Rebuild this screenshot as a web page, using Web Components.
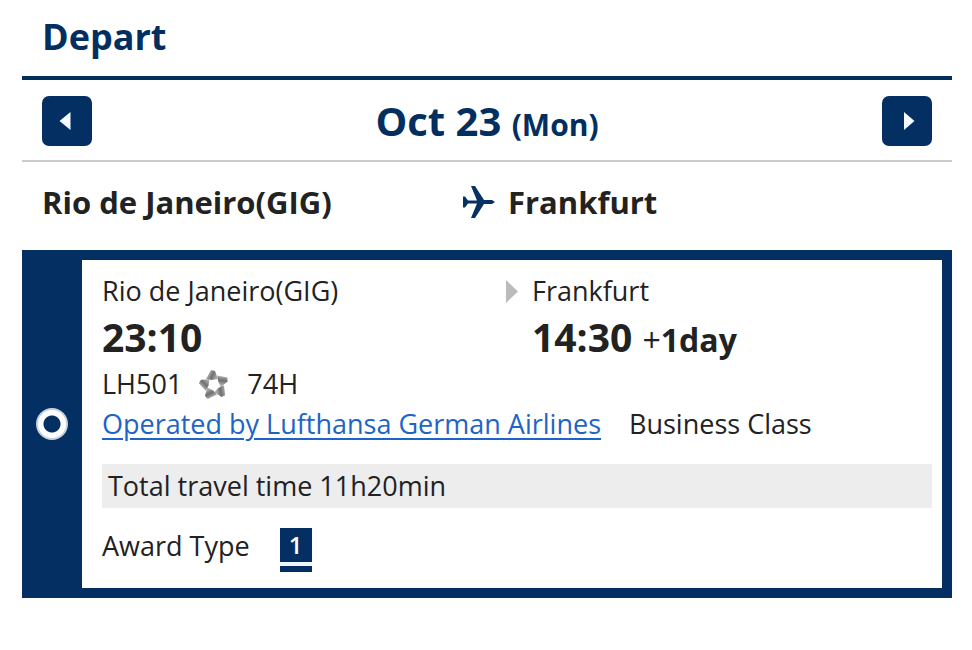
<!DOCTYPE html>
<html lang="en">
<head>
<meta charset="utf-8">
<title>Depart</title>
<style>
  body { margin: 0; background: #fff; color: #222; font-family: "Open Sans", "Noto Sans", sans-serif; font-size: 27px; line-height: 40px; }
</style>
</head>
<body>
<flight-section>
  <span slot="title">Depart</span>
  <date-nav slot="nav" day="Oct 23" weekday="(Mon)"></date-nav>
  <route-heading slot="route" from="Rio de Janeiro(GIG)" to="Frankfurt"></route-heading>
  <flight-card>
    <flight-leg>
      <flight-stop place="Rio de Janeiro(GIG)" time="23:10"></flight-stop>
      <flight-stop slot="arrival" place="Frankfurt" time="14:30"><span>+</span>1day</flight-stop>
    </flight-leg>
    <flight-info number="LH501" aircraft="74H" operator="Operated by Lufthansa German Airlines" cabin="Business Class"></flight-info>
    <travel-time>Total travel time 11h20min</travel-time>
    <award-type level="1">Award Type</award-type>
  </flight-card>
</flight-section>
<script>
const define = (name, markup) => customElements.define(name, class extends HTMLElement {
  constructor() {
    super();
    this.attachShadow({ mode: 'open' });
  }
  connectedCallback() {
    this.shadowRoot.innerHTML = markup(key => this.getAttribute(key) || '');
  }
});

define('flight-section', () => `
  <style>
    :host { display: block; padding: 0 20px 0 22px; }
    h1 { margin: 0; padding: 12px 20px 14px; border-bottom: 4px solid #022f5f; color: #022f5f; font-size: 36px; line-height: 50px; font-weight: 700; }
  </style>
  <section>
    <h1><slot name="title"></slot></h1>
    <slot name="nav"></slot>
    <slot name="route"></slot>
    <slot></slot>
  </section>`);

define('date-nav', a => `
  <style>
    :host { display: block; border-bottom: 2px solid #ccc; color: #022f5f; }
    nav { display: flex; align-items: center; justify-content: space-between; padding: 16px 20px 14px; }
    h2 { margin: 0; font-size: 40px; line-height: 50px; font-weight: 700; }
    small { font-size: 30px; line-height: 30px; }
    button { display: grid; place-items: center; width: 50px; height: 50px; padding: 0; border: 0; border-radius: 7px; background: #042f62; }
    svg { display: block; width: 50px; height: 50px; }
  </style>
  <nav aria-label="Departure date">
    <button type="button" aria-label="Previous day"><svg viewBox="0 0 50 50"><path d="M17.500 25 28.500 16V34Z" fill="#f4faff"/></svg></button>
    <h2>${a('day')} <small>${a('weekday')}</small></h2>
    <button type="button" aria-label="Next day"><svg viewBox="0 0 50 50"><path d="M32.500 25 22 16V34Z" fill="#f4faff"/></svg></button>
  </nav>`);

define('route-heading', a => `
  <style>
    :host { display: grid; grid-template-columns: 420fr 470fr; align-items: center; padding: 20px 20px 28px; font-size: 31px; font-weight: 700; }
    .to { display: flex; align-items: center; gap: 12px; }
    svg { width: 34px; height: 34px; flex: none; }
  </style>
  <span>${a('from')}</span>
  <span class="to">
    <svg viewBox="0 0 34 34" aria-hidden="true"><path fill="#063163" d="M1 11.500H3L6 15.500H15L9 1H13L22 15H30L33 17 30 19H22L13 33H9L15 18.500H6L3 22.500H1Z"/></svg>
    ${a('to')}
  </span>`);

define('flight-card', () => `
  <style>
    :host { display: flex; background: #042f62; padding: 10px 10px 10px 0; }
    label { flex: none; width: 60px; display: grid; place-items: center; }
    input { appearance: none; box-sizing: border-box; width: 32px; height: 32px; margin: 0; border: 2px solid #c9d1da; border-radius: 50%; background: radial-gradient(circle, #042f62 8px, #fff 9px); }
    article { flex: 1; min-width: 0; background: #fff; padding: 11px 10px 16px 20px; }
  </style>
  <label><input type="radio" name="flight" aria-label="Select this flight" checked></label>
  <article><slot></slot></article>`);

define('flight-leg', () => `
  <style>
    :host { display: grid; grid-template-columns: 404fr 426fr; padding-bottom: 1px; }
    .arrival { display: flex; gap: 14px; }
    svg { flex: none; width: 12px; height: 40px; }
  </style>
  <slot></slot>
  <div class="arrival">
    <svg viewBox="0 0 12 40" aria-hidden="true"><path d="M0 9 12 20.500 0 32Z" fill="#bbb"/></svg>
    <slot name="arrival"></slot>
  </div>`);

define('flight-stop', a => `
  <style>
    :host { display: block; }
    .time { font-size: 39px; line-height: 52px; font-weight: 700; }
    small { font-size: 32px; line-height: 32px; }
    ::slotted(span) { font-weight: 400; }
  </style>
  <div>${a('place')}</div>
  <div class="time">${a('time')} <small><slot></slot></small></div>`);

define('flight-info', a => `
  <style>
    :host { display: block; padding-bottom: 20px; }
    div { display: flex; align-items: center; }
    svg { width: 32px; height: 32px; margin: 0 17px 0 16px; }
    .operated { gap: 28px; }
    a { color: #1d64c8; text-decoration-thickness: 2px; text-underline-offset: 4px; }
  </style>
  <div>
    <span>${a('number')}</span>
    <svg viewBox="0 0 32 32" role="img" aria-label="Star Alliance">
      <defs>
        <linearGradient id="g" x1="0" y1="0" x2="1" y2="0.400"><stop offset="0" stop-color="#e4e4e4"/><stop offset=".65" stop-color="#707070"/><stop offset="1" stop-color="#aaa"/></linearGradient>
        <filter id="soft"><feGaussianBlur stdDeviation="0.500"/></filter>
      </defs>
      <g fill="url(#g)" filter="url(#soft)">
        <path d="M13 2 17 3 20 11 14 12 8 11Z"/>
        <path d="M13 2 17 3 20 11 14 12 8 11Z" transform="rotate(72 16 17)"/>
        <path d="M13 2 17 3 20 11 14 12 8 11Z" transform="rotate(144 16 17)"/>
        <path d="M13 2 17 3 20 11 14 12 8 11Z" transform="rotate(216 16 17)"/>
        <path d="M13 2 17 3 20 11 14 12 8 11Z" transform="rotate(288 16 17)"/>
      </g>
    </svg>
    <span>${a('aircraft')}</span>
  </div>
  <div class="operated"><a href="#operator">${a('operator')}</a><span>${a('cabin')}</span></div>`);

define('travel-time', () => `
  <style>:host { display: block; padding: 2px 6px; background: #ededed; }</style>
  <slot></slot>`);

define('award-type', a => `
  <style>
    :host { display: flex; align-items: flex-start; gap: 30px; padding-top: 20px; }
    .name { line-height: 36px; }
    .badge { width: 32px; height: 44px; background: #042f62; color: #fff; text-align: center; font-size: 24px; line-height: 34px; font-weight: 600; }
    .badge::after { content: ""; display: block; height: 4px; background: #eef5fc; }
  </style>
  <span class="name"><slot></slot></span>
  <span class="badge">${a('level')}</span>`);
</script>
</body>
</html>
